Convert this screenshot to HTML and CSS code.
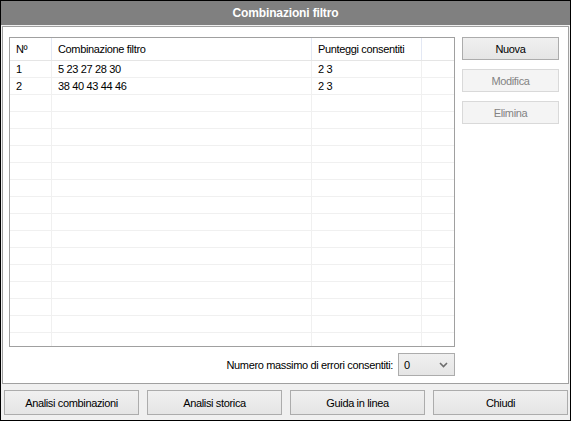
FILE: index.html
```html
<!DOCTYPE html>
<html>
<head>
<meta charset="utf-8">
<link rel="stylesheet" href="styles.css">
</head>
<body>
<div class="window">
  <div class="titlebar">Combinazioni filtro</div>
  <div class="panel">
    <div class="main">
      <div class="list">
        <div class="row header">
          <div class="c c1">Nº</div>
          <div class="c c2">Combinazione filtro</div>
          <div class="c c3">Punteggi consentiti</div>
          <div class="c c4"></div>
        </div>
        <div class="row"><div class="c c1">1</div><div class="c c2">5 23 27 28 30</div><div class="c c3">2 3</div><div class="c c4"></div></div>
        <div class="row"><div class="c c1">2</div><div class="c c2">38 40 43 44 46</div><div class="c c3">2 3</div><div class="c c4"></div></div>
        <div class="row"><div class="c c1"></div><div class="c c2"></div><div class="c c3"></div><div class="c c4"></div></div>
        <div class="row"><div class="c c1"></div><div class="c c2"></div><div class="c c3"></div><div class="c c4"></div></div>
        <div class="row"><div class="c c1"></div><div class="c c2"></div><div class="c c3"></div><div class="c c4"></div></div>
        <div class="row"><div class="c c1"></div><div class="c c2"></div><div class="c c3"></div><div class="c c4"></div></div>
        <div class="row"><div class="c c1"></div><div class="c c2"></div><div class="c c3"></div><div class="c c4"></div></div>
        <div class="row"><div class="c c1"></div><div class="c c2"></div><div class="c c3"></div><div class="c c4"></div></div>
        <div class="row"><div class="c c1"></div><div class="c c2"></div><div class="c c3"></div><div class="c c4"></div></div>
        <div class="row"><div class="c c1"></div><div class="c c2"></div><div class="c c3"></div><div class="c c4"></div></div>
        <div class="row"><div class="c c1"></div><div class="c c2"></div><div class="c c3"></div><div class="c c4"></div></div>
        <div class="row"><div class="c c1"></div><div class="c c2"></div><div class="c c3"></div><div class="c c4"></div></div>
        <div class="row"><div class="c c1"></div><div class="c c2"></div><div class="c c3"></div><div class="c c4"></div></div>
        <div class="row"><div class="c c1"></div><div class="c c2"></div><div class="c c3"></div><div class="c c4"></div></div>
        <div class="row"><div class="c c1"></div><div class="c c2"></div><div class="c c3"></div><div class="c c4"></div></div>
        <div class="row"><div class="c c1"></div><div class="c c2"></div><div class="c c3"></div><div class="c c4"></div></div>
        <div class="row"><div class="c c1"></div><div class="c c2"></div><div class="c c3"></div><div class="c c4"></div></div>
      </div>
      <div class="side">
        <button class="btn">Nuova</button>
        <button class="btn" disabled>Modifica</button>
        <button class="btn" disabled>Elimina</button>
      </div>
    </div>
    <div class="errors">
      <span class="label">Numero massimo di errori consentiti:</span>
      <div class="select">
        <span>0</span>
        <svg class="chev" width="9" height="6" viewBox="0 0 9 6"><path d="M1 1 L4.5 4.5 L8 1" fill="none" stroke="#6d6d6d" stroke-width="1.6"/></svg>
      </div>
    </div>
  </div>
  <div class="footer">
    <button class="btn big">Analisi combinazioni</button>
    <button class="btn big">Analisi storica</button>
    <button class="btn big">Guida in linea</button>
    <button class="btn big">Chiudi</button>
  </div>
</div>
</body>
</html>
```

FILE: styles.css
```css
* { box-sizing: border-box; }
html, body { margin: 0; padding: 0; background: #ffffff; }
body {
  font-family: "Liberation Sans", Arial, sans-serif;
  font-size: 11px;
  letter-spacing: -0.35px;
  color: #000;
}
.window {
  width: 571px;
  height: 421px;
  border: 1px solid #000;
  background: #f0f0f0;
  display: flex;
  flex-direction: column;
}
.titlebar {
  height: 24px;
  background: #808080;
  color: #fff;
  font-weight: bold;
  font-size: 12px;
  letter-spacing: -0.15px;
  text-align: center;
  line-height: 24px;
  margin-bottom: 1px;
}
.panel {
  margin: 0 1px;
  height: 358px;
  border: 1px solid #a0a0a0;
  background: #fff;
  padding: 10px 0 0 6px;
}
.main {
  display: flex;
  gap: 7px;
}
.list {
  width: 446px;
  height: 310px;
  border: 1px solid #a0a0a0;
  overflow: hidden;
  background: #fff;
}
.row {
  display: flex;
  height: 17px;
  border-bottom: 1px solid #f0f0f0;
}
.row .c {
  border-right: 1px solid #f0f0f0;
  padding-left: 6px;
  line-height: 16px;
  white-space: nowrap;
}
.c1 { width: 42px; }
.c2 { width: 260px; }
.c3 { width: 110px; }
.c4 { flex: 1; border-right: none !important; }
.row.header {
  height: 23px;
  border-bottom: 1px solid #e5e5e5;
}
.row.header .c {
  line-height: 22px;
  border-right: 1px solid #e3e8f4;
}
.side {
  display: flex;
  flex-direction: column;
  gap: 9px;
  width: 97px;
}
.btn {
  font-family: "Liberation Sans", Arial, sans-serif;
  font-size: 11px;
  letter-spacing: -0.35px;
  color: #000;
  height: 23px;
  border: 1px solid #acacac;
  background: linear-gradient(#f0f0f0, #e5e5e5);
  padding: 0;
  margin: 0;
  border-radius: 0;
}
.btn:disabled {
  color: #838383;
  border-color: #d9d9d9;
  background: #f4f4f4;
}
.errors {
  width: 446px;
  margin-top: 6px;
  display: flex;
  justify-content: flex-end;
  align-items: center;
  gap: 5px;
  height: 23px;
}
.select {
  width: 57px;
  height: 23px;
  border: 1px solid #acacac;
  background: linear-gradient(#f0f0f0, #e5e5e5);
  display: flex;
  align-items: center;
  justify-content: space-between;
  padding: 0 6px 0 5px;
}
.footer {
  padding: 6px 0 0 3px;
  display: grid;
  grid-template-columns: repeat(4, 135px);
  column-gap: 8px;
}
.btn.big { height: 25px; }
```
